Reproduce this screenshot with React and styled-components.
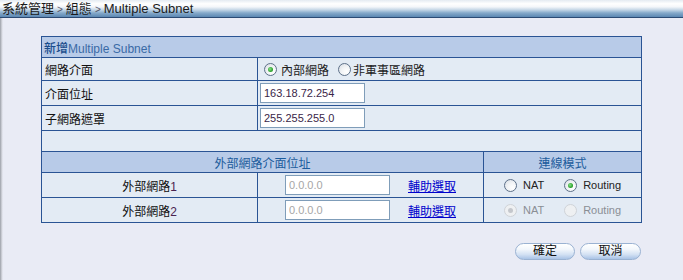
import React from 'react';
import styled, { createGlobalStyle } from 'styled-components';

const GlobalStyle = createGlobalStyle`
  html, body {
    margin: 0;
    padding: 0;
    background: #e9ebf5;
  }
  body {
    font-family: "Liberation Sans", "Noto Sans CJK TC", sans-serif;
    font-size: 12px;
    color: #111;
  }
`;

const Page = styled.div`
  width: 683px;
  height: 280px;
  overflow: hidden;
  background: #e9ebf5;
`;

const TitleBar = styled.div`
  height: 17px;
  line-height: 17px;
  padding-left: 2px;
  font-size: 13px;
  color: #1a1a1a;
  white-space: nowrap;
  border-bottom: 1px solid #2b4a74;
  background: linear-gradient(
    to bottom,
    #e4ebf2 0%,
    #ffffff 22%,
    #f4f7fa 40%,
    #c4d6e6 58%,
    #85a9ca 76%,
    #5b87b2 100%
  );
`;

const Sep = styled.span`
  font-size: 10px;
  color: #556;
  margin: 0 3px;
`;

const Body = styled.div`
  height: 262px;
  padding-left: 3px;
  background: linear-gradient(to right, #9a9ea6 0px, #b9bcc4 1px, #d6d8e0 2px, #e9ebf5 3px);
`;

const Content = styled.div`
  padding: 18px 0 0 38px;
  width: 600px;
`;

const Table = styled.table`
  width: 600px;
  table-layout: fixed;
  border-collapse: collapse;
  border: 1px solid #2a5494;
`;

const Row = styled.tr`
  height: ${(p) => p.$h}px;
  background: ${(p) => (p.$head ? '#b8cbe8' : '#e3ebf4')};
`;

const Cell = styled.td`
  border: 1px solid #2a5494;
  padding: 0 ${(p) => (p.$pad ?? 3)}px;
  text-align: ${(p) => p.$align || 'left'};
  vertical-align: middle;
  white-space: nowrap;
`;

const HeadCell = styled(Cell)`
  color: #1c5c9c;
  font-size: 12px;
`;

const CaptionTitle = styled.span`
  color: #1a4d8c;
  font-weight: 500;
`;

const CaptionText = styled.span`
  color: #3a6aa6;
`;

const Label = styled.span`
  font-size: 12px;
  color: #111;
`;

const Num = styled.span`
  color: #4a2350;
  font-size: 12px;
`;

const RadioGroup = styled.div`
  display: flex;
  align-items: center;
  gap: ${(p) => p.$gap || 8}px;
  justify-content: ${(p) => p.$justify || 'flex-start'};
`;

const RadioLabel = styled.label`
  display: flex;
  align-items: center;
  gap: ${(p) => p.$gap || 4}px;
  font-size: ${(p) => p.$size || 12}px;
  color: ${(p) => (p.$disabled ? '#8a8e94' : '#222')};
`;

const RadioDot = styled.span`
  position: relative;
  display: inline-block;
  box-sizing: border-box;
  width: 13px;
  height: 13px;
  border-radius: 50%;
  border: 1px solid ${(p) => (p.$disabled ? '#cfd3d8' : '#5d7089')};
  background: ${(p) =>
    p.$disabled
      ? '#eef0f2'
      : 'radial-gradient(circle at 70% 70%, #ffffff 0%, #f2f4f6 45%, #d6dbe2 100%)'};
  &::after {
    content: '';
    display: ${(p) => (p.$checked ? 'block' : 'none')};
    position: absolute;
    left: 3px;
    top: 3px;
    width: 5px;
    height: 5px;
    border-radius: 50%;
    background: ${(p) =>
      p.$disabled
        ? '#c4c7cc'
        : 'radial-gradient(circle at 40% 40%, #8be08b 0%, #2fa52f 60%, #1c7f1c 100%)'};
  }
`;

const Radio = ({ checked, disabled, children, size, gap }) => (
  <RadioLabel $disabled={disabled} $size={size} $gap={gap}>
    <RadioDot $checked={checked} $disabled={disabled} />
    {children}
  </RadioLabel>
);

const TextInput = styled.input`
  box-sizing: border-box;
  width: 105px;
  height: 20px;
  margin: 0;
  padding: 0 3px;
  border: 1px solid #7f9db9;
  background: #fff;
  font-family: "Liberation Sans", sans-serif;
  font-size: 11px;
  color: ${(p) => (p.$muted ? '#a6a6a6' : '#3a2648')};
  outline: none;
  display: block;
`;

const AddrWrap = styled.div`
  display: flex;
  align-items: center;
  justify-content: center;
  gap: 18px;
`;

const HelperLink = styled.a`
  color: #0000cc;
  text-decoration: underline;
  font-size: 12px;
  cursor: pointer;
`;

const ButtonBar = styled.div`
  display: flex;
  justify-content: flex-end;
  gap: 5px;
  margin-top: 20px;
`;

const Button = styled.button`
  box-sizing: border-box;
  width: ${(p) => p.$w || 60}px;
  height: 17px;
  padding: 0;
  border: 1px solid #9ab2d2;
  border-radius: 9px;
  background: linear-gradient(to bottom, #ffffff 0%, #f3f7fc 35%, #d3e1f3 70%, #a9c3e6 100%);
  font-family: "Liberation Sans", "Noto Sans CJK TC", sans-serif;
  font-size: 12px;
  line-height: 15px;
  color: #111;
`;

export default function App() {
  return (
    <>
      <GlobalStyle />
      <Page>
        <TitleBar>
          系統管理<Sep>&gt;</Sep>組態<Sep>&gt;</Sep>Multiple Subnet
        </TitleBar>
        <Body>
          <Content>
            <Table>
              <colgroup>
                <col style={{ width: 216 }} />
                <col style={{ width: 226 }} />
                <col style={{ width: 158 }} />
              </colgroup>
              <tbody>
                <Row $h={21} $head>
                  <HeadCell colSpan={3} $pad={2}>
                    <CaptionTitle>新增</CaptionTitle>
                    <CaptionText>Multiple Subnet</CaptionText>
                  </HeadCell>
                </Row>
                <Row $h={23}>
                  <Cell>
                    <Label>網路介面</Label>
                  </Cell>
                  <Cell colSpan={2} $pad={6}>
                    <RadioGroup $gap={9}>
                      <Radio checked>內部網路</Radio>
                      <Radio gap={2}>非軍事區網路</Radio>
                    </RadioGroup>
                  </Cell>
                </Row>
                <Row $h={25}>
                  <Cell>
                    <Label>介面位址</Label>
                  </Cell>
                  <Cell colSpan={2} $pad={2}>
                    <TextInput defaultValue="163.18.72.254" />
                  </Cell>
                </Row>
                <Row $h={25}>
                  <Cell>
                    <Label>子網路遮罩</Label>
                  </Cell>
                  <Cell colSpan={2} $pad={2}>
                    <TextInput defaultValue="255.255.255.0" />
                  </Cell>
                </Row>
                <Row $h={21}>
                  <Cell colSpan={3} />
                </Row>
                <Row $h={21} $head>
                  <HeadCell colSpan={2} $align="center">
                    外部網路介面位址
                  </HeadCell>
                  <HeadCell $align="center">連線模式</HeadCell>
                </Row>
                {[
                  { n: 1, nat: false, routing: true, disabled: false },
                  { n: 2, nat: true, routing: false, disabled: true },
                ].map((r) => (
                  <Row $h={25} key={r.n}>
                    <Cell $align="center">
                      <Label>外部網路</Label>
                      <Num>{r.n}</Num>
                    </Cell>
                    <Cell>
                      <AddrWrap>
                        <TextInput $muted defaultValue="0.0.0.0" />
                        <HelperLink>輔助選取</HelperLink>
                      </AddrWrap>
                    </Cell>
                    <Cell $pad={0}>
                      <RadioGroup $gap={20} $justify="center">
                        <Radio size={11} gap={6} checked={r.nat} disabled={r.disabled}>
                          NAT
                        </Radio>
                        <Radio size={11} gap={6} checked={r.routing} disabled={r.disabled}>
                          Routing
                        </Radio>
                      </RadioGroup>
                    </Cell>
                  </Row>
                ))}
              </tbody>
            </Table>
            <ButtonBar>
              <Button $w={60}>確定</Button>
              <Button $w={61}>取消</Button>
            </ButtonBar>
          </Content>
        </Body>
      </Page>
    </>
  );
}
